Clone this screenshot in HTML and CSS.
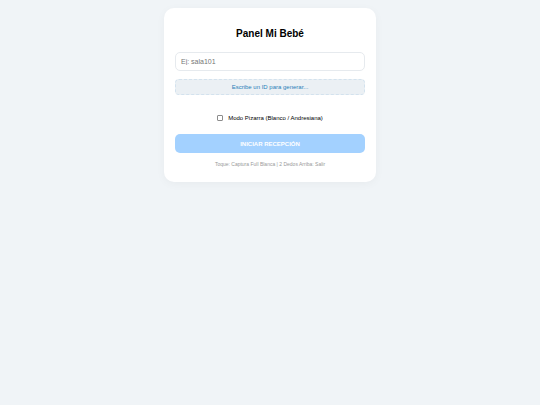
FILE: index.html
```html
<!DOCTYPE html>
<html lang="es">
<head>
<meta charset="utf-8">
<meta name="viewport" content="width=device-width, initial-scale=1">
<title>Panel Mi Bebé</title>
<link rel="stylesheet" href="styles.css">
</head>
<body>
<main class="card">
  <h1 class="title">Panel Mi Bebé</h1>
  <input class="room" type="text" placeholder="Ej: sala101" aria-label="ID de sala">
  <div class="link-box">Escribe un ID para generar...</div>
  <label class="mode"><input class="check" type="checkbox">Modo Pizarra (Blanco / Andresiana)</label>
  <button class="start" type="button" disabled>INICIAR RECEPCIÓN</button>
  <p class="hint">Toque: Captura Full Blanca | 2 Dedos Arriba: Salir</p>
</main>
</body>
</html>
```

FILE: styles.css
```css
* {
  box-sizing: border-box;
}

body {
  margin: 0;
  padding: 8px;
  background: #f0f4f7;
  color: #000;
  font-family: "Liberation Sans", Arial, sans-serif;
}

.card {
  display: flex;
  flex-direction: column;
  max-width: 212px;
  margin: 0 auto;
  padding: 18px 11px 14px;
  border-radius: 10px;
  background: #fff;
  box-shadow: 0 2px 10px rgba(0, 0, 0, 0.04);
  text-align: center;
}

.title {
  margin: 0 0 10px;
  font-size: 10px;
  line-height: 16px;
}

.room {
  width: 100%;
  height: 19px;
  margin-bottom: 8px;
  padding: 0 5px;
  border: 1px solid #e6eaee;
  border-radius: 5px;
  background: #fff;
  font: 7px "Liberation Sans", Arial, sans-serif;
}

.room::placeholder {
  color: #757575;
}

.link-box {
  margin-bottom: 19px;
  border: 1px dashed #d3e2ee;
  border-radius: 4px;
  background: #ebf0f4;
  color: #2980b9;
  font-size: 6px;
  line-height: 14px;
}

.mode {
  display: flex;
  align-items: center;
  justify-content: center;
  gap: 5px;
  margin-bottom: 12px;
  font-size: 6px;
  line-height: 8px;
}

.check {
  width: 6px;
  height: 6px;
  margin: 0;
  appearance: none;
  border: 1px solid #8c8c8c;
  border-radius: 1px;
  background: #fff;
}

.check:checked {
  background: #2980b9;
}

.start {
  height: 19px;
  margin-bottom: 8px;
  padding: 0;
  border: 0;
  border-radius: 5px;
  background: #a3d1ff;
  color: #fff;
  font: bold 6px "Liberation Sans", Arial, sans-serif;
}

.hint {
  margin: 0;
  color: #999;
  font-size: 5px;
  line-height: 7px;
}
```
